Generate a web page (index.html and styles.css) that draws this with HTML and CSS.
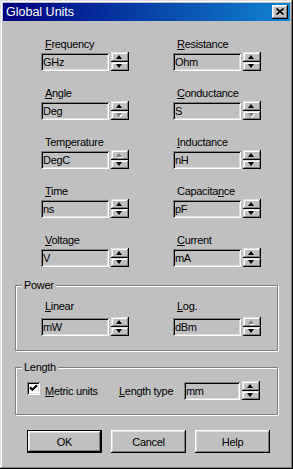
FILE: index.html
```html
<!DOCTYPE html>
<html lang="en">

<head>
    <meta charset="UTF-8">
    <meta name="viewport" content="width=device-width, initial-scale=1.0">
    <title>Global Units</title>
    <link rel="stylesheet" href="styles.css">
</head>

<body>
    <div class="window">
        <div class="titlebar">
            <span class="title">Global Units</span>
            <button class="close-btn" aria-label="Close">
                <svg width="8" height="7" viewBox="0 0 8 7">
                    <path d="M0.5 0.5 L7.5 6.5 M7.5 0.5 L0.5 6.5" stroke="#000" stroke-width="1.7" fill="none" />
                </svg>
            </button>
        </div>

        <div class="client">
            <!-- unit selectors -->
            <div class="units">
                <div class="field">
                    <div class="lbl"><u>F</u>requency</div>
                    <div class="ctl"><div class="box">GHz</div><div class="spin"><span class="up"></span><span class="down"></span></div></div>
                </div>
                <div class="field">
                    <div class="lbl"><u>R</u>esistance</div>
                    <div class="ctl"><div class="box">Ohm</div><div class="spin"><span class="up"></span><span class="down"></span></div></div>
                </div>
                <div class="field">
                    <div class="lbl"><u>A</u>ngle</div>
                    <div class="ctl"><div class="box">Deg</div><div class="spin"><span class="up"></span><span class="down off"></span></div></div>
                </div>
                <div class="field">
                    <div class="lbl"><u>C</u>onductance</div>
                    <div class="ctl"><div class="box">S</div><div class="spin"><span class="up"></span><span class="down off"></span></div></div>
                </div>
                <div class="field">
                    <div class="lbl">Tem<u>p</u>erature</div>
                    <div class="ctl"><div class="box">DegC</div><div class="spin"><span class="up off"></span><span class="down"></span></div></div>
                </div>
                <div class="field">
                    <div class="lbl"><u>I</u>nductance</div>
                    <div class="ctl"><div class="box">nH</div><div class="spin"><span class="up"></span><span class="down"></span></div></div>
                </div>
                <div class="field">
                    <div class="lbl"><u>T</u>ime</div>
                    <div class="ctl"><div class="box">ns</div><div class="spin"><span class="up"></span><span class="down"></span></div></div>
                </div>
                <div class="field">
                    <div class="lbl">Capacita<u>n</u>ce</div>
                    <div class="ctl"><div class="box">pF</div><div class="spin"><span class="up"></span><span class="down"></span></div></div>
                </div>
                <div class="field">
                    <div class="lbl"><u>V</u>oltage</div>
                    <div class="ctl"><div class="box">V</div><div class="spin"><span class="up"></span><span class="down"></span></div></div>
                </div>
                <div class="field">
                    <div class="lbl"><u>C</u>urrent</div>
                    <div class="ctl"><div class="box">mA</div><div class="spin"><span class="up"></span><span class="down"></span></div></div>
                </div>
            </div>

            <fieldset class="group power">
                <legend>Power</legend>
                <div class="units power-units">
                    <div class="field">
                        <div class="lbl"><u>L</u>inear</div>
                        <div class="ctl"><div class="box">mW</div><div class="spin"><span class="up"></span><span class="down"></span></div></div>
                    </div>
                    <div class="field">
                        <div class="lbl"><u>L</u>og.</div>
                        <div class="ctl"><div class="box">dBm</div><div class="spin"><span class="up off"></span><span class="down"></span></div></div>
                    </div>
                </div>
            </fieldset>

            <fieldset class="group length">
                <legend>Length</legend>
                <div class="length-row">
                    <div class="check-wrap">
                        <span class="checkbox">
                            <svg width="13" height="13" viewBox="0 0 13 13">
                                <path d="M3 5.4 L5.4 7.8 L10 3.2" stroke="#000" stroke-width="2.2" fill="none" />
                            </svg>
                        </span>
                        <span class="check-text"><u>M</u>etric units</span>
                    </div>
                    <div class="len-lbl"><u>L</u>ength type</div>
                    <div class="box small">mm</div>
                    <div class="spin"><span class="up"></span><span class="down"></span></div>
                </div>
            </fieldset>

            <div class="buttons">
                <button class="btn default">OK</button>
                <button class="btn">Cancel</button>
                <button class="btn">Help</button>
            </div>
        </div>
    </div>
</body>

</html>
```
FILE: styles.css
```css
body {
    margin: 0;
    background: #c0c0c0;
    font-family: "Liberation Sans", Arial, sans-serif;
    font-size: 11px;
    letter-spacing: -0.3px;
    color: #000;
}

.window {
    width: 293px;
    height: 469px;
    box-sizing: border-box;
    padding: 3px;
    background: #c0c0c0;
    box-shadow: inset -1px -1px #000, inset 1px 1px #dfdfdf, inset -2px -2px #808080, inset 2px 2px #fff;
}

/* title bar */
.titlebar {
    height: 18px;
    display: flex;
    align-items: center;
    justify-content: space-between;
    padding: 0 2px 0 3px;
    background: linear-gradient(to right, #000080, #1084d0);
}

.title {
    color: #fff;
    font-size: 12.5px;
    letter-spacing: 0;
}

.close-btn {
    width: 16px;
    height: 14px;
    padding: 0;
    border: none;
    background: #c0c0c0;
    display: flex;
    align-items: center;
    justify-content: center;
    box-shadow: inset -1px -1px #000, inset 1px 1px #fff, inset -2px -2px #808080, inset 2px 2px #dfdfdf;
}

.close-btn svg {
    display: block;
    margin: 0 1px 1px 0;
}

/* client area */
.client {
    padding-top: 17px;
}

.units {
    display: grid;
    grid-template-columns: 132px 1fr;
    row-gap: 16px;
    margin-left: 38px;
}

.lbl {
    line-height: 13px;
    height: 13px;
    padding-left: 4px;
    margin-bottom: 2px;
    white-space: nowrap;
}

.ctl {
    display: flex;
    align-items: flex-start;
    gap: 2px;
    height: 18px;
}

.box {
    width: 68px;
    height: 18px;
    box-sizing: border-box;
    padding: 2px 0 0 2px;
    line-height: 14px;
    background: #c0c0c0;
    box-shadow: inset 1px 1px #808080, inset -1px -1px #fff, inset 2px 2px #000, inset -2px -2px #dfdfdf;
}

.box.small {
    width: 56px;
}

/* spinner */
.spin {
    width: 18px;
    height: 19px;
    margin-top: -1px;
    display: flex;
    flex-direction: column;
}

.spin span {
    flex: 1;
    position: relative;
    background: #c0c0c0;
    box-shadow: inset -1px -1px #000, inset 1px 1px #dfdfdf, inset -2px -2px #808080, inset 2px 2px #fff;
}

.spin span::after {
    content: "";
    position: absolute;
    left: 5px;
    width: 0;
    height: 0;
    border-left: 3.5px solid transparent;
    border-right: 3.5px solid transparent;
}

.spin .up::after {
    top: 2.5px;
    border-bottom: 4px solid #000;
}

.spin .down::after {
    top: 2.5px;
    border-top: 4px solid #000;
}

.spin .up.off::after {
    border-bottom-color: #808080;
    filter: drop-shadow(1px 1px 0 #fff);
}

.spin .down.off::after {
    border-top-color: #808080;
    filter: drop-shadow(1px 1px 0 #fff);
}

/* group boxes */
.group {
    margin: 0 12px;
    padding: 8px 0 14px 0;
    border: 1px solid #808080;
    box-shadow: inset 1px 1px #fff, 1px 1px #fff;
    min-width: 0;
}

.group legend {
    margin-left: 6px;
    padding: 0 2px;
    line-height: 13px;
    background: #c0c0c0;
}

.power {
    margin-top: 12px;
}

.power-units {
    margin-left: 25px;
}

.power-units .lbl {
    margin-bottom: 5px;
}

.length {
    margin-top: 10px;
}

.length-row {
    display: flex;
    align-items: flex-start;
    padding-left: 11px;
}

.check-wrap {
    width: 92px;
    display: flex;
    align-items: flex-start;
}

.checkbox {
    width: 13px;
    height: 13px;
    background: #fff;
    box-shadow: inset 1px 1px #808080, inset -1px -1px #fff, inset 2px 2px #000, inset -2px -2px #dfdfdf;
}

.checkbox svg {
    display: block;
}

.check-text {
    margin-left: 5px;
    margin-top: 3px;
    line-height: 13px;
}

.len-lbl {
    width: 65px;
    line-height: 18px;
}

.length-row .spin {
    margin-left: 2px;
}

/* dialog buttons */
.buttons {
    display: flex;
    gap: 9px;
    margin-top: 15px;
    padding-left: 24px;
}

.btn {
    width: 75px;
    height: 23px;
    padding: 0;
    border: none;
    background: #c0c0c0;
    font-family: inherit;
    font-size: 11px;
    letter-spacing: -0.3px;
    color: #000;
    box-shadow: inset -1px -1px #000, inset 1px 1px #fff, inset -2px -2px #808080, inset 2px 2px #dfdfdf;
}

.btn.default {
    box-shadow: inset 0 0 0 1px #000, inset -2px -2px #000, inset 2px 2px #fff, inset -3px -3px #808080, inset 3px 3px #dfdfdf;
}
```
